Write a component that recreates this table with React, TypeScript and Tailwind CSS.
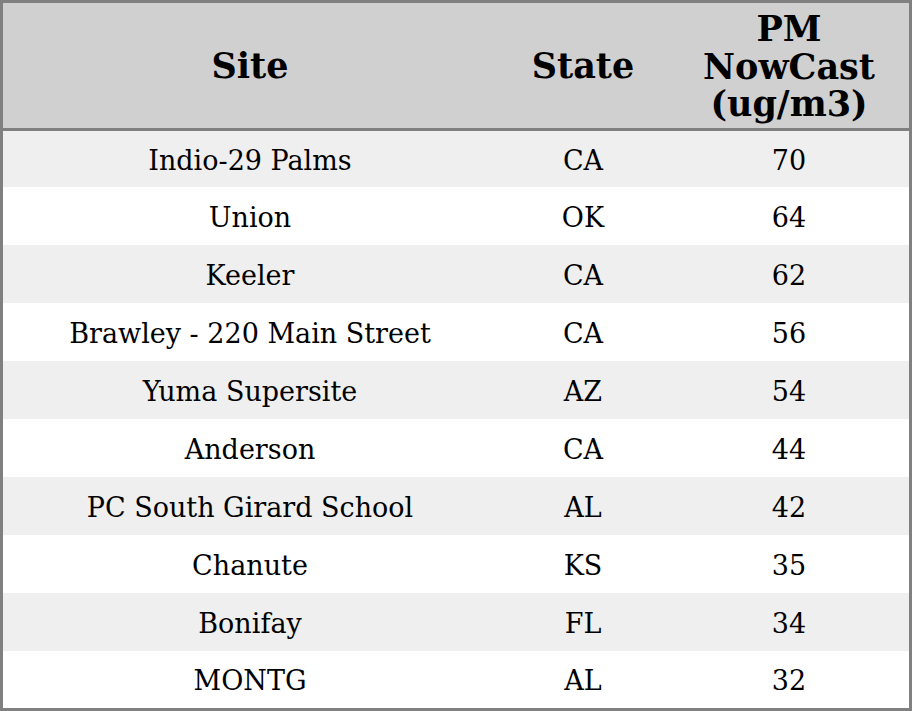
import React from 'react';

const rows = [
  { site: 'Indio-29 Palms', state: 'CA', pm: 70 },
  { site: 'Union', state: 'OK', pm: 64 },
  { site: 'Keeler', state: 'CA', pm: 62 },
  { site: 'Brawley - 220 Main Street', state: 'CA', pm: 56 },
  { site: 'Yuma Supersite', state: 'AZ', pm: 54 },
  { site: 'Anderson', state: 'CA', pm: 44 },
  { site: 'PC South Girard School', state: 'AL', pm: 42 },
  { site: 'Chanute', state: 'KS', pm: 35 },
  { site: 'Bonifay', state: 'FL', pm: 34 },
  { site: 'MONTG', state: 'AL', pm: 32 },
];

const rowHeight = (i: number) => (i === 0 ? 'h-[56px]' : i === rows.length - 1 ? 'h-[57px]' : 'h-[58px]');

const App: React.FC = () => {
  return (
    <div className="w-[912px] h-[711px] bg-white font-['DejaVu_Serif',serif] text-black">
      <div className="border-[3px] border-[#808080] h-full">
        <table className="w-full border-separate border-spacing-0 table-fixed">
          <colgroup>
            <col className="w-[494px]" />
            <col className="w-[172px]" />
            <col className="w-[240px]" />
          </colgroup>
          <thead>
            <tr className="bg-[#d0d0d0] text-[35px] font-bold">
              <th className="h-[128px] p-0 pt-[2px] border-b-[3px] border-[#808080] text-center font-bold">Site</th>
              <th className="p-0 pt-[2px] border-b-[3px] border-[#808080] text-center font-bold">State</th>
              <th className="p-0 pt-[2px] border-b-[3px] border-[#808080] text-center font-bold leading-[37.5px]">
                PM
                <br />
                NowCast
                <br />
                (ug/m3)
              </th>
            </tr>
          </thead>
          <tbody className="text-[27px]">
            {rows.map((r, i) => (
              <tr key={r.site} className={i % 2 === 0 ? 'bg-[#efefef]' : 'bg-white'}>
                <td className={`${rowHeight(i)} p-0 pt-[4px] text-center`}>{r.site}</td>
                <td className="p-0 pt-[4px] text-center">{r.state}</td>
                <td className="p-0 pt-[4px] text-center">{r.pm}</td>
              </tr>
            ))}
          </tbody>
        </table>
      </div>
    </div>
  );
};

export default App;
